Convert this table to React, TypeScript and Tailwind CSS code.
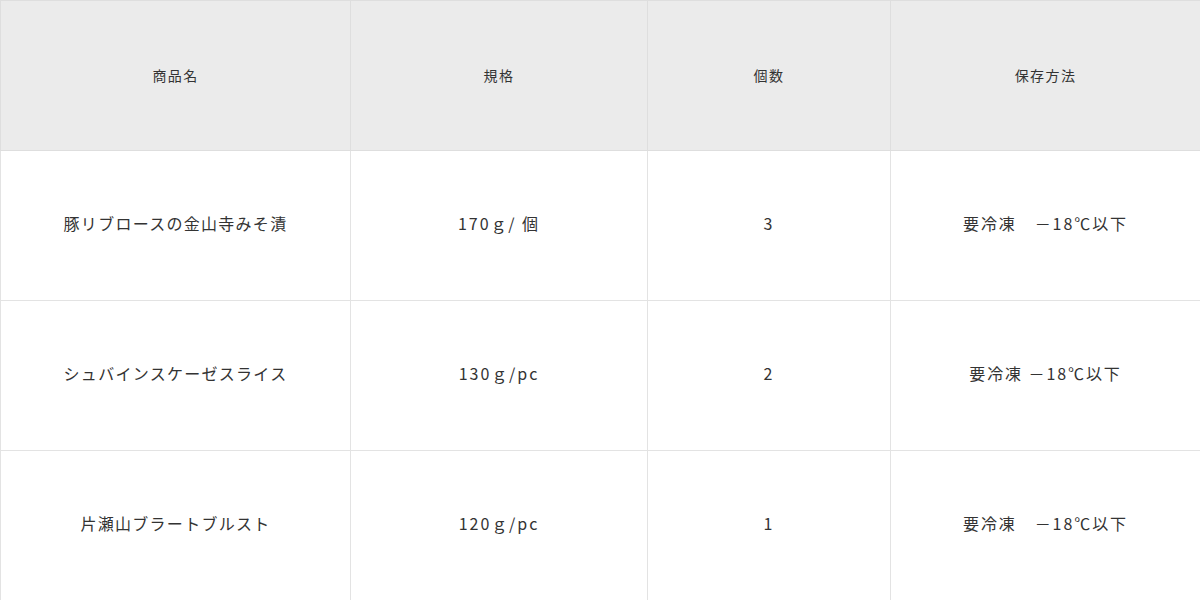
const headers = ["商品名", "規格", "個数", "保存方法"];

const rows = [
  ["豚リブロースの金山寺みそ漬", "170ｇ/ 個", "3", "要冷凍　－18℃以下"],
  ["シュバインスケーゼスライス", "130ｇ/pc", "2", "要冷凍 －18℃以下"],
  ["片瀬山ブラートブルスト", "120ｇ/pc", "1", "要冷凍　－18℃以下"],
];

export default function App() {
  return (
    <div
      className="w-[1200px] h-[600px] bg-white text-[#333] overflow-hidden"
      style={{ fontFamily: '"Noto Sans CJK JP", "Noto Sans", sans-serif' }}
    >
      <table className="w-[1200px] table-fixed border-collapse">
        <colgroup>
          <col className="w-[350px]" />
          <col className="w-[297px]" />
          <col className="w-[243px]" />
          <col className="w-[310px]" />
        </colgroup>
        <thead>
          <tr className="h-[150px] bg-[#ebebeb]">
            {headers.map((h) => (
              <th
                key={h}
                className="border border-[#dedede] text-[14px] tracking-[0.1em] font-normal text-center align-middle"
              >
                {h}
              </th>
            ))}
          </tr>
        </thead>
        <tbody>
          {rows.map((r, i) => (
            <tr key={i} className="h-[150px]">
              {r.map((c, j) => (
                <td
                  key={j}
                  className={
                    "border border-[#e3e3e3] text-[16px] text-center align-middle pb-[5px] " +
                    (j === 0 ? "tracking-[0.08em]" : "tracking-[0.12em]")
                  }
                >
                  {c}
                </td>
              ))}
            </tr>
          ))}
        </tbody>
      </table>
    </div>
  );
}
